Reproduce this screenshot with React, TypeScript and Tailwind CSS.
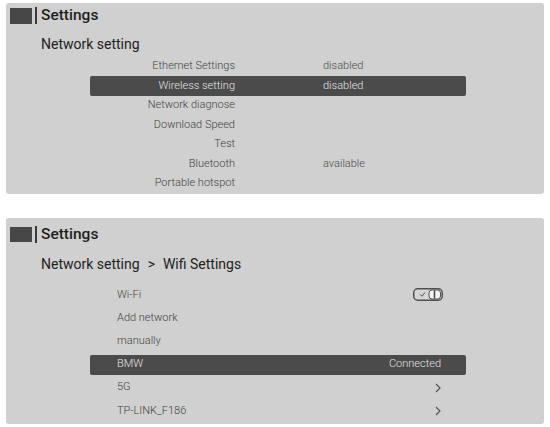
const font = { fontFamily: 'Roboto, "Liberation Sans", sans-serif' };

function Header({ top, block }: { top: string; block: string }) {
  return (
    <div className={`flex items-center ${top}`}>
      <div className={`ml-[4px] w-[22px] bg-[#474747] ${block}`} />
      <div className="ml-[3px] h-[17px] w-[2px] bg-[#3a3a3a]" />
      <div className="ml-[4px] text-[15.5px] font-medium leading-none text-[#1f1f1f]">Settings</div>
    </div>
  );
}

const rows1: [string, string][] = [
  ['Ethernet Settings', 'disabled'],
  ['Wireless setting', 'disabled'],
  ['Network diagnose', ''],
  ['Download Speed', ''],
  ['Test', ''],
  ['Bluetooth', 'available'],
  ['Portable hotspot', ''],
];

function Toggle() {
  return (
    <svg width="30" height="13" viewBox="0 0 30 13">
      <rect x="0.75" y="0.75" width="28.5" height="11.5" rx="4" fill="#d6d6d6" stroke="#505050" strokeWidth="1.5" />
      <polyline points="7,6.3 9,8.3 12,4.5" fill="none" stroke="#505050" strokeWidth="1" />
      <rect x="16" y="2" width="11.5" height="9" rx="3" fill="#f4f4f4" stroke="#505050" strokeWidth="1" />
      <line x1="21.5" y1="2.5" x2="21.5" y2="10.5" stroke="#404040" strokeWidth="1.5" />
    </svg>
  );
}

function Chevron() {
  return (
    <svg width="6" height="10" viewBox="0 0 6 10">
      <polyline points="1,1 5,5 1,9" fill="none" stroke="#555" strokeWidth="1.2" />
    </svg>
  );
}

export default function App() {
  return (
    <div className="h-[427px] w-[550px] overflow-hidden bg-white px-[6px] pt-[3px]" style={font}>
      <div className="flex h-[191px] flex-col rounded-[3px] bg-[#cfd0cf]">
        <Header top="pt-[4px]" block="h-[16px]" />
        <div className="ml-[35px] mt-[10px] flex h-[20px] items-center text-[14px] text-[#222]">Network setting</div>
        <div className="ml-[84px] mt-[2.5px] w-[376px]">
          {rows1.map(([label, value], i) => {
            const active = i === 1;
            return (
              <div key={label} className="flex h-[19.5px] items-center">
                <div
                  className={`flex h-[20px] w-full items-center text-[11px] font-light ${
                    active ? 'rounded-[2px] bg-[#4b4b4b] text-[#e6e6e6]' : 'text-[#3f3f3f]'
                  }`}
                >
                  <span className="w-[145px] text-right">{label}</span>
                  <span className={`ml-[88px] ${active ? '' : 'text-[#4a4a4a]'}`}>{value}</span>
                </div>
              </div>
            );
          })}
        </div>
      </div>

      <div className="mt-[24px] flex h-[206px] flex-col rounded-[3px] bg-[#cfd0cf]">
        <Header top="pt-[8px]" block="h-[15px]" />
        <div className="ml-[35px] mt-[11px] flex h-[20px] items-center text-[14px] text-[#222]">
          <span>Network setting</span>
          <span className="ml-[8px]">&gt;</span>
          <span className="ml-[8px]">Wifi Settings</span>
        </div>
        <div className="ml-[84px] mt-[9.4px] w-[376px] text-[11px] font-light text-[#3f3f3f]">
          <div className="flex h-[23.2px] items-center pl-[27px] pr-[23px]">
            <span className="flex-1">Wi-Fi</span>
            <Toggle />
          </div>
          <div className="flex h-[23.2px] items-center pl-[27px]">Add network</div>
          <div className="flex h-[23.2px] items-center pl-[27px]">manually</div>
          <div className="flex h-[23.2px] items-center">
            <div className="flex h-[20px] w-full items-center rounded-[2px] bg-[#4b4b4b] pl-[27px] pr-[25px] text-[#e6e6e6]">
              <span className="flex-1">BMW</span>
              <span>Connected</span>
            </div>
          </div>
          <div className="flex h-[23.2px] items-center pl-[27px] pr-[25px]">
            <span className="flex-1">5G</span>
            <Chevron />
          </div>
          <div className="flex h-[23.2px] items-center pl-[27px] pr-[25px]">
            <span className="flex-1">TP-LINK_F186</span>
            <Chevron />
          </div>
        </div>
      </div>
    </div>
  );
}
